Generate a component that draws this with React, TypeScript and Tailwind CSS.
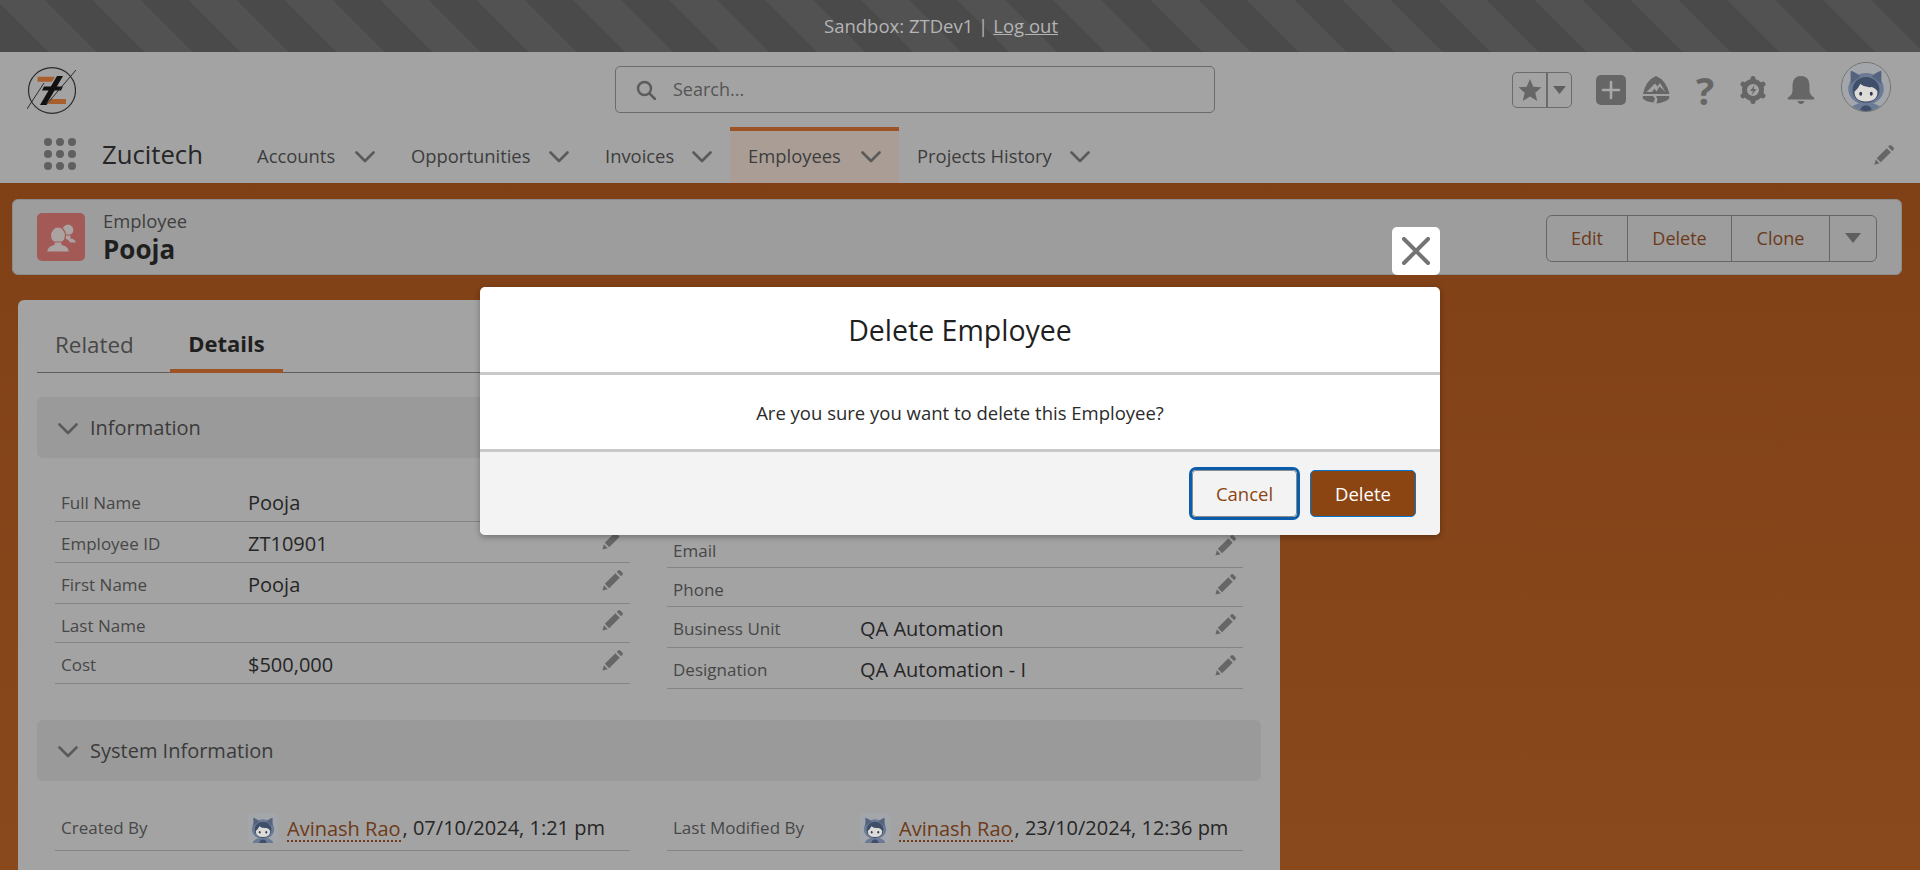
function Pencil({ className = "" }: { className?: string }) {
  return (
    <svg viewBox="0 0 24 24" className={className} fill="#666666">
      <path d="M4 15.500 15 4.500 19.500 9 8.500 20Z" />
      <path d="M3 17 7 21 1.500 22.500Z" />
      <path d="M16.500 3 18 1.500Q19 .7 20 1.500L22.500 4Q23.300 5 22.500 6L21 7.500Z" />
    </svg>
  );
}

function Chevron({ className = "" }: { className?: string }) {
  return (
    <svg viewBox="0 0 20 12" className={className} fill="none" stroke="#5a5a5a" strokeWidth="2.600" strokeLinecap="round" strokeLinejoin="round">
      <path d="M1.500 1.500 10 10 18.500 1.500" />
    </svg>
  );
}

function Logo() {
  return (
    <svg viewBox="0 0 49 47" className="w-[49px] h-[47px]">
      <ellipse cx="25" cy="23.500" rx="23.500" ry="22.800" fill="none" stroke="#2b2b2b" strokeWidth="1.200" />
      <path d="M10.500 9.700H28L25 14.700H10.500Z" fill="#a85f2c" />
      <path d="M24 32H39V37H21Z" fill="#a85f2c" />
      <path d="M30 9 36 9 19 38 13 38Z" fill="#111111" />
      <path d="M17 19.500H36L34 23.500H15Z" fill="#111111" />
      <path d="M0 42 17 16M19 38 49 3" stroke="#2b2b2b" strokeWidth="1" fill="none" />
    </svg>
  );
}

function Astro({ className = "" }: { className?: string }) {
  return (
    <svg viewBox="0 0 50 50" className={className}>
      <rect width="50" height="50" fill="#a3a6aa" />
      <ellipse cx="25" cy="27" rx="18.500" ry="16.500" fill="#6c7b95" />
      <path d="M9 8Q14 9 19 14L9 22ZM41 8Q36 9 31 14L41 22Z" fill="#55637e" />
      <ellipse cx="25" cy="50" rx="17" ry="9" fill="#6c7b95" />
      <ellipse cx="25" cy="50" rx="6" ry="6" fill="#3f4e69" />
      <ellipse cx="25" cy="28" rx="14" ry="13.500" fill="#3f4e69" />
      <path d="M13 30Q17 27 19 22 24 26 31 25 35 26 37 30 37 40 25 40 13 40 13 30Z" fill="#dedcd9" />
      <ellipse cx="19.500" cy="32" rx="1.500" ry="2" fill="#2c3850" />
      <ellipse cx="30.500" cy="32" rx="1.500" ry="2" fill="#2c3850" />
    </svg>
  );
}

function Caret({ className = "" }: { className?: string }) {
  return (
    <svg viewBox="0 0 16 10" className={className} fill="#5f5f5f">
      <path d="M0 0H16L8 10Z" />
    </svg>
  );
}

function GlobalIcons() {
  return (
    <div className="flex items-center">
      <div className="flex w-[60px] h-[36px] border border-[#6b6b6b] rounded-[5px]">
        <div className="w-[35px] flex items-center justify-center border-r-2 border-[#6b6b6b]">
          <svg viewBox="0 0 24 24" className="w-[24px] h-[24px]" fill="#666666">
            <path d="M12 1 15.300 8.700 23.500 9.300 17.300 14.700 19.200 23 12 18.600 4.800 23 6.700 14.700.5 9.300 8.700 8.700Z" />
          </svg>
        </div>
        <div className="flex-1 flex items-center justify-center">
          <Caret className="w-[13px] h-[8px]" />
        </div>
      </div>
      <div className="ml-[24px] w-[30px] h-[30px] bg-[#666666] rounded-[5px] flex items-center justify-center">
        <svg viewBox="0 0 20 20" className="w-[20px] h-[20px]">
          <path d="M10 2V18M2 10H18" stroke="#a8a8a8" strokeWidth="2.600" strokeLinecap="round" />
        </svg>
      </div>
      <svg viewBox="0 0 28 28" className="ml-[16px] w-[28px] h-[28px]" fill="#666666">
        <path fillRule="evenodd" d="M14 0Q24 4 27.500 18H1Q4 4 14 0ZM4.500 16H10L12.500 12.500 14.500 15.500 17.500 10.500 23.500 16 18 7 15.500 10.500 13 7.500Z" />
        <path d="M.8 20H11L13 22.500 11.500 26.500Q4 26 .8 22.500ZM14 20H27.200V22.500Q24 26 14.500 27.500L15.500 23Z" />
      </svg>
      <span className="ml-[25px] w-[20px] text-center text-[38px] leading-[36px] font-bold text-[#666666]">?</span>
      <svg viewBox="0 0 26 28" className="ml-[25px] w-[26px] h-[28px]">
        <circle cx="13" cy="14" r="8.500" fill="none" stroke="#666666" strokeWidth="5" />
        <g stroke="#666666" strokeWidth="5" strokeLinecap="round">
          <path d="M13 2.500V4M13 24V25.500M3 8.200 4.300 9M21.700 19 23 19.800M3 19.800 4.300 19M21.700 9 23 8.200" />
        </g>
        <path d="M14.500 9 10 15H13L11.500 19.500 16.500 13H13.500Z" fill="#666666" />
      </svg>
      <svg viewBox="0 0 28 28" className="ml-[21px] w-[28px] h-[28px]" fill="#666666">
        <path d="M14 0Q22 0 22.500 9V15Q23 19 27 21.500Q28 23.500 26 23.500H2Q0 23.500 1 21.500Q5 19 5.500 15V9Q6 0 14 0Z" />
        <path d="M10.500 25H17.500Q16.500 28 14 28 11.500 28 10.500 25Z" />
      </svg>
      <div className="ml-[26px] mt-[-5px] w-[50px] h-[50px] rounded-full overflow-hidden border border-[#6f6f6f]">
        <Astro className="w-full h-full" />
      </div>
    </div>
  );
}

const navItems = [
  { label: "Accounts", width: "w-[154px]" },
  { label: "Opportunities", width: "w-[194px]" },
  { label: "Invoices", width: "w-[143px]" },
  { label: "Employees", width: "w-[169px]", active: true },
  { label: "Projects History", width: "w-[209px]" },
];

function Row({
  label,
  value,
  height,
  edit = true,
}: {
  label: string;
  value?: string;
  height: string;
  edit?: boolean;
}) {
  return (
    <div className={`flex items-center border-b border-[#858585] pl-[6px] pr-[6px] ${height}`}>
      <span className={`w-[187px] text-[17px] text-[#474747] ${value ? "pt-[3px]" : "pt-[6px]"}`}>{label}</span>
      <span className="flex-1 pt-[4px] text-[20px] text-[#262626]">{value}</span>
      {edit && <Pencil className="w-[23px] h-[23px] mb-[5px]" />}
    </div>
  );
}

function UserRow({ label, date }: { label: string; date: string }) {
  return (
    <div className="flex items-center h-[46px] border-b border-[#858585] pl-[6px]">
      <span className="w-[187px] text-[17px] text-[#474747]">{label}</span>
      <span className="w-[30px] h-[30px] rounded-[4px] overflow-hidden mr-[9px]">
        <Astro className="w-full h-full" />
      </span>
      <span className="text-[20px] text-[#6e3a18] border-b-2 border-dotted border-[#6e3a18] leading-[23px] mt-[4px]">Avinash Rao</span>
      <span className="ml-[2px] text-[20px] text-[#262626]">, {date}</span>
    </div>
  );
}

function SectionHeader({ title }: { title: string }) {
  return (
    <div className="flex items-center h-[61px] rounded-[6px] bg-[#9a9a9a] pl-[21px]">
      <Chevron className="w-[20px] h-[12px] mt-[2px]" />
      <span className="ml-[12px] pt-[1px] text-[20px] text-[#3a3a3a]">{title}</span>
    </div>
  );
}

export default function App() {
  return (
    <div className="relative h-[870px] overflow-hidden flex flex-col bg-gradient-to-b from-[#7e3e15] to-[#8a491c] font-['Open_Sans','Noto_Sans',sans-serif]">
      <div className="h-[52px] shrink-0 flex items-center justify-center pr-[38px] text-[18.500px] text-[#b4b4b4] bg-[repeating-linear-gradient(45deg,#4a4a4a_0px,#4a4a4a_34px,#525252_34px,#525252_68px)]">
        <span>Sandbox: ZTDev1 | </span>
        <span className="ml-[5px] underline">Log out</span>
      </div>

      <div className="h-[131px] shrink-0 flex flex-col bg-[#a3a3a3]">
        <div className="h-[75px] grid grid-cols-[615px_600px_1fr] items-center">
          <div className="pl-[27px] pt-[2px]">
            <Logo />
          </div>
          <div className="h-[47px] flex items-center border border-[#6b6b6b] rounded-[5px] pl-[20px]">
            <svg viewBox="0 0 20 20" className="w-[20px] h-[20px]" fill="none" stroke="#5c5c5c" strokeWidth="2.500">
              <circle cx="8.500" cy="8.500" r="6.500" />
              <path d="M13.500 13.500 19 19" strokeLinecap="round" />
            </svg>
            <span className="ml-[17px] text-[18px] text-[#555555]">Search...</span>
          </div>
          <div className="flex justify-end pr-[29px]">
            <GlobalIcons />
          </div>
        </div>

        <div className="h-[56px] flex items-stretch">
          <div className="ml-[44px] w-[32px] grid grid-cols-3 gap-[4px] self-center mt-[-2px]">
            {Array.from({ length: 9 }).map((_, i) => (
              <span key={i} className="w-[8px] h-[8px] rounded-full bg-[#5f5f5f]" />
            ))}
          </div>
          <span className="ml-[26px] w-[137px] self-center text-[25.700px] text-[#262626]">Zucitech</span>
          {navItems.map((item) => (
            <div
              key={item.label}
              className={`flex items-center justify-between px-[18px] pt-[1px] text-[18.400px] text-[#3d3d3d] ${item.width} ${
                item.active ? "border-t-4 border-[#9c5426] bg-[#aa9d96] pb-[4px]" : ""
              }`}
            >
              <span>{item.label}</span>
              <Chevron className="w-[20px] h-[12px] mt-[2px]" />
            </div>
          ))}
          <div className="flex-1 flex items-center justify-end pr-[25px]">
            <Pencil className="w-[22px] h-[22px]" />
          </div>
        </div>
      </div>

      <div className="mt-[16px] ml-[12px] mr-[18px] h-[76px] shrink-0 flex items-center rounded-[6px] border border-[#8c8c8c] bg-[#9d9d9d] pl-[24px] pr-[24px]">
        <svg viewBox="0 0 48 48" className="w-[48px] h-[48px] shrink-0 rounded-[5px] bg-[#a35a57]">
          <g fill="#aaa3a1" stroke="#a35a57" strokeWidth="1.200">
            <circle cx="31" cy="17" r="6" />
            <path d="M28 22H34V25Q39 26 39.500 30H33Q31 27 28 26Z" />
            <ellipse cx="21" cy="22.500" rx="7.500" ry="8.500" />
            <path d="M17 29H25V31.500Q32 33 32.500 39H9.500Q10 33 17 31.500Z" />
          </g>
        </svg>
        <div className="ml-[18px] flex flex-col">
          <span className="text-[18.400px] leading-[24px] text-[#3f3f3f]">Employee</span>
          <span className="text-[26px] leading-[32px] font-bold text-[#1f1f1f]">Pooja</span>
        </div>
        <div className="ml-auto mt-[2px] flex h-[47px] border border-[#666666] rounded-[6px] text-[18px] text-[#6b3a1a]">
          <span className="w-[81px] flex items-center justify-center border-r border-[#666666]">Edit</span>
          <span className="w-[104px] flex items-center justify-center border-r border-[#666666]">Delete</span>
          <span className="w-[98px] flex items-center justify-center border-r border-[#666666]">Clone</span>
          <span className="w-[46px] flex items-center justify-center">
            <Caret className="w-[16px] h-[10px]" />
          </span>
        </div>
      </div>

      <div className="mt-[25px] ml-[18px] w-[1262px] flex-1 rounded-t-[6px] bg-[#a3a3a3] px-[19px]">
        <div className="h-[73px] flex items-end border-b border-[#5f5f5f]">
          <span className="ml-[18px] w-[115px] pb-[10px] text-[22.400px] text-[#474747]">Related</span>
          <span className="w-[113px] mb-[-1px] pb-[9px] border-b-4 border-[#9c5426] text-center text-[22px] font-bold text-[#1f1f1f]">
            Details
          </span>
        </div>

        <div className="mt-[24px]">
          <SectionHeader title="Information" />
        </div>
        <div className="grid grid-cols-[575px_576px] gap-[37px] px-[18px]">
          <div className="pt-[23px]">
            <Row label="Full Name" value="Pooja" height="h-[41px]" edit={false} />
            <Row label="Employee ID" value="ZT10901" height="h-[41px]" />
            <Row label="First Name" value="Pooja" height="h-[41px]" />
            <Row label="Last Name" height="h-[39px]" />
            <Row label="Cost" value="$500,000" height="h-[41px]" />
          </div>
          <div className="pt-[70px]">
            <Row label="Email" height="h-[40px]" />
            <Row label="Phone" height="h-[39px]" />
            <Row label="Business Unit" value="QA Automation" height="h-[41px]" />
            <Row label="Designation" value="QA Automation - I" height="h-[41px]" />
          </div>
        </div>

        <div className="mt-[31px]">
          <SectionHeader title="System Information" />
        </div>
        <div className="grid grid-cols-[575px_576px] gap-[37px] px-[18px] pt-[24px]">
          <UserRow label="Created By" date="07/10/2024, 1:21 pm" />
          <UserRow label="Last Modified By" date="23/10/2024, 12:36 pm" />
        </div>
      </div>

      {/* modal */}
      <button className="absolute left-[1392px] top-[227px] w-[48px] h-[48px] bg-white rounded-[5px] flex items-center justify-center">
        <svg viewBox="0 0 28 28" className="w-[28px] h-[28px]">
          <path d="M2 2 26 26M26 2 2 26" stroke="#747474" strokeWidth="4" strokeLinecap="round" />
        </svg>
      </button>
      <div className="absolute left-[480px] top-[287px] w-[960px] h-[248px] flex flex-col rounded-[5px] overflow-hidden bg-white shadow-[0_2px_6px_rgba(0,0,0,0.3)]">
        <div className="h-[88px] shrink-0 flex items-center justify-center pt-[2px] border-b-[3px] border-[#c9c9c9] text-[28.500px] text-[#1f1f1f]">
          Delete Employee
        </div>
        <div className="h-[77px] shrink-0 flex items-center justify-center pt-[2px] border-b-[3px] border-[#c9c9c9] text-[18.500px] text-[#2b2b2b]">
          Are you sure you want to delete this Employee?
        </div>
        <div className="flex-1 flex items-center justify-end gap-[10px] pr-[24px] bg-[#f3f3f3]">
          <button className="w-[111px] h-[53px] rounded-[7px] border-[3px] border-[#0b5cab] bg-[#f3f3f3] text-[18.500px] text-[#8b4513] outline outline-1 outline-offset-[-4px] outline-[#8a8a8a]">
            Cancel
          </button>
          <button className="w-[106px] h-[47px] rounded-[5px] border border-[#0176d3] bg-[#8b4513] text-[18.500px] text-white">
            Delete
          </button>
        </div>
      </div>
    </div>
  );
}
